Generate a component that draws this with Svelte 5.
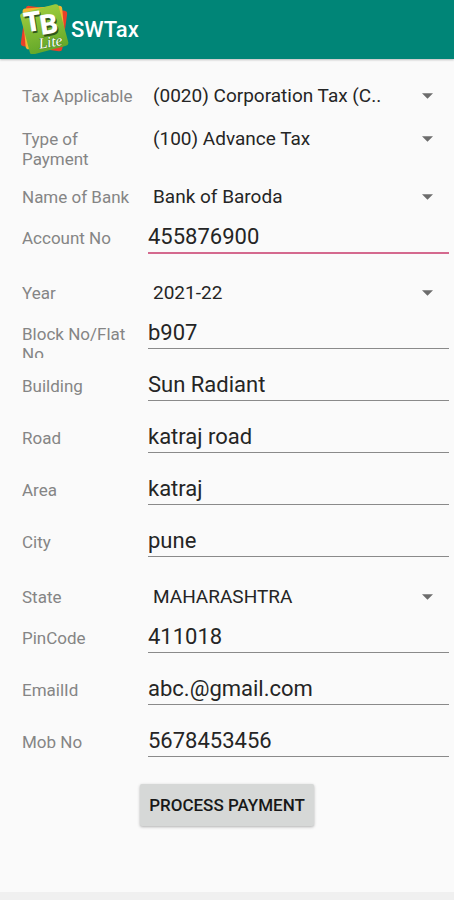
<script lang="ts">
  interface Field {
    id: string;
    label: string;
    value: string;
    kind: 'select' | 'text';
    type?: string;
    active?: boolean;
  }

  let groups = $state<Field[][]>([
    [
      { id: 'tax', label: 'Tax Applicable', value: '(0020) Corporation Tax (C..', kind: 'select' },
      { id: 'payment', label: 'Type of Payment', value: '(100) Advance Tax', kind: 'select' },
      { id: 'bank', label: 'Name of Bank', value: 'Bank of Baroda', kind: 'select' },
      { id: 'account', label: 'Account No', value: '455876900', kind: 'text', active: true }
    ],
    [
      { id: 'year', label: 'Year', value: '2021-22', kind: 'select' },
      { id: 'block', label: 'Block No/Flat No', value: 'b907', kind: 'text' },
      { id: 'building', label: 'Building', value: 'Sun Radiant', kind: 'text' },
      { id: 'road', label: 'Road', value: 'katraj road', kind: 'text' },
      { id: 'area', label: 'Area', value: 'katraj', kind: 'text' },
      { id: 'city', label: 'City', value: 'pune', kind: 'text' }
    ],
    [
      { id: 'state', label: 'State', value: 'MAHARASHTRA', kind: 'select' },
      { id: 'pincode', label: 'PinCode', value: '411018', kind: 'text' },
      { id: 'email', label: 'EmailId', value: 'abc.@gmail.com', kind: 'text', type: 'email' },
      { id: 'mobile', label: 'Mob No', value: '5678453456', kind: 'text', type: 'tel' }
    ]
  ]);
</script>

<div class="screen">
  <header class="app-bar">
    <svg class="logo" viewBox="0 0 50 50" aria-hidden="true">
      <defs>
        <linearGradient id="leaf" x1="0" y1="0" x2="0" y2="1">
          <stop offset="0" stop-color="#9ccb3c" />
          <stop offset="1" stop-color="#64a82a" />
        </linearGradient>
      </defs>
      <rect x="5" y="5" width="41" height="40" rx="3" fill="#e9402a" transform="rotate(8 25 25)" />
      <rect x="6" y="4" width="39" height="40" rx="3" fill="#f3b632" transform="rotate(-5 25 25)" />
      <rect x="6" y="5" width="39" height="42" rx="3" fill="url(#leaf)" transform="rotate(-15 25 25)" />
      <g transform="rotate(-9 25 25)">
        <g class="logo-letters">
          <text x="8" y="28" fill="#31551b">T</text>
          <text x="23" y="33" fill="#31551b">B</text>
          <text x="7" y="26" fill="#fff">T</text>
          <text x="22" y="31" fill="#fff">B</text>
        </g>
        <text class="logo-lite" x="18" y="44" stroke="#4f8a24">Lite</text>
      </g>
    </svg>
    <h1>SWTax</h1>
  </header>

  <form onsubmit={(e) => e.preventDefault()}>
    {#each groups as group}
      <div class="group">
        {#each group as field (field.id)}
          <div class="row {field.kind}">
            <label for={field.id}>{field.label}</label>
            {#if field.kind === 'select'}
              <div class="spinner">
                <select id={field.id} bind:value={field.value}>
                  <option value={field.value}>{field.value}</option>
                </select>
                <svg class="arrow" viewBox="0 0 12 6" aria-hidden="true">
                  <path d="M0 0h12L6 6z" />
                </svg>
              </div>
            {:else}
              <input
                id={field.id}
                type={field.type ?? 'text'}
                class:active={field.active}
                bind:value={field.value}
                spellcheck="false"
              />
            {/if}
          </div>
        {/each}
      </div>
    {/each}
    <div class="actions">
      <button type="submit">PROCESS PAYMENT</button>
    </div>
  </form>

  <div class="bottom-bar"></div>
</div>

<style>
  :global(body) {
    background: #fafafa;
  }

  .screen {
    display: flex;
    flex-direction: column;
    min-height: 100vh;
    font-family: Roboto, 'Liberation Sans', sans-serif;
    color: #252525;
  }

  .app-bar {
    display: flex;
    align-items: center;
    gap: 2px;
    height: 59px;
    padding-left: 18px;
    background: #008577;
    box-shadow: 0 1px 2px rgba(0, 0, 0, 0.25);
  }

  .logo {
    width: 51px;
    height: 51px;
    margin-bottom: 2px;
  }

  .logo-letters {
    font-size: 27px;
    font-weight: 900;
  }

  .logo-lite {
    font-family: 'Liberation Serif', serif;
    font-size: 15px;
    font-style: italic;
    fill: #fff;
    stroke-width: 1px;
    paint-order: stroke;
  }

  h1 {
    margin: 0;
    font-size: 22px;
    font-weight: 500;
    color: #fff;
  }

  form {
    flex: 1;
    padding-top: 15px;
  }

  .group {
    padding: 0 5px 1px 22px;
  }

  .row {
    display: grid;
    grid-template-columns: 112px 1fr;
    column-gap: 14px;
    align-items: start;
    min-height: 43px;
  }

  .row.text {
    height: 52px;
  }

  label {
    margin-top: 12px;
    padding-bottom: 6px;
    font-size: 17px;
    line-height: 20px;
    color: #858585;
  }

  .text label {
    max-height: 34px;
    margin-top: 10px;
    padding-bottom: 0;
    overflow: hidden;
  }

  .spinner {
    display: grid;
    align-items: center;
  }

  select,
  .arrow {
    grid-area: 1 / 1;
  }

  select {
    width: 100%;
    height: 43px;
    padding: 0 40px 0 5px;
    border: none;
    outline: none;
    appearance: none;
    background: none;
    font: inherit;
    font-size: 19px;
    color: inherit;
  }

  .arrow {
    justify-self: end;
    width: 11px;
    height: 6px;
    margin-right: 16px;
    fill: #6c6c6c;
    pointer-events: none;
  }

  input {
    box-sizing: border-box;
    width: 100%;
    min-width: 0;
    height: 35px;
    padding: 4px 0 2px;
    border: none;
    border-bottom: 1px solid #8a8a8a;
    border-radius: 0;
    outline: none;
    background: none;
    font: inherit;
    font-size: 22px;
    color: inherit;
  }

  input.active {
    height: 36px;
    border-bottom: 2px solid #d4698e;
  }

  .actions {
    display: flex;
    justify-content: center;
    padding-top: 9px;
  }

  button {
    height: 42px;
    padding: 0 9px;
    border: none;
    border-radius: 2px;
    background: #d6d8d7;
    box-shadow: 0 1px 3px rgba(0, 0, 0, 0.3);
    font: inherit;
    font-size: 17px;
    font-weight: 500;
    color: #181818;
  }

  .bottom-bar {
    height: 8px;
    background: #f0f0f0;
  }
</style>
